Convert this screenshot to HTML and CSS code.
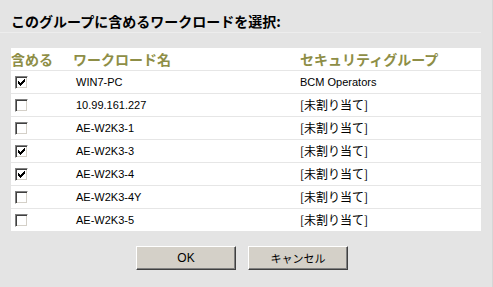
FILE: index.html
```html
<!DOCTYPE html>
<html lang="ja">
<head>
<meta charset="utf-8">
<title>ワークロード選択</title>
<link rel="stylesheet" href="styles.css">
</head>
<body>
<div class="page">
  <div class="title">このグループに含めるワークロードを選択:</div>
  <div class="table">
    <div class="row head">
      <div class="c1">含める</div>
      <div class="c2">ワークロード名</div>
      <div class="c3">セキュリティグループ</div>
    </div>
    <div class="row">
      <div class="c1"><span class="cb checked"><svg viewBox="0 0 13 13" width="13" height="13"><path d="M9 3h1v1H9zM8 4h2v1H8zM3 5h1v1H3zM7 5h3v1H7zM3 6h2v1H3zM6 6h3v1H6zM3 7h5v1H3zM4 8h3v1H4zM5 9h1v1H5z"/></svg></span></div>
      <div class="c2 name">WIN7-PC</div>
      <div class="c3 name">BCM Operators</div>
    </div>
    <div class="row">
      <div class="c1"><span class="cb"></span></div>
      <div class="c2 name">10.99.161.227</div>
      <div class="c3 none">[未割り当て]</div>
    </div>
    <div class="row">
      <div class="c1"><span class="cb"></span></div>
      <div class="c2 name">AE-W2K3-1</div>
      <div class="c3 none">[未割り当て]</div>
    </div>
    <div class="row">
      <div class="c1"><span class="cb checked"><svg viewBox="0 0 13 13" width="13" height="13"><path d="M9 3h1v1H9zM8 4h2v1H8zM3 5h1v1H3zM7 5h3v1H7zM3 6h2v1H3zM6 6h3v1H6zM3 7h5v1H3zM4 8h3v1H4zM5 9h1v1H5z"/></svg></span></div>
      <div class="c2 name">AE-W2K3-3</div>
      <div class="c3 none">[未割り当て]</div>
    </div>
    <div class="row">
      <div class="c1"><span class="cb checked"><svg viewBox="0 0 13 13" width="13" height="13"><path d="M9 3h1v1H9zM8 4h2v1H8zM3 5h1v1H3zM7 5h3v1H7zM3 6h2v1H3zM6 6h3v1H6zM3 7h5v1H3zM4 8h3v1H4zM5 9h1v1H5z"/></svg></span></div>
      <div class="c2 name">AE-W2K3-4</div>
      <div class="c3 none">[未割り当て]</div>
    </div>
    <div class="row">
      <div class="c1"><span class="cb"></span></div>
      <div class="c2 name">AE-W2K3-4Y</div>
      <div class="c3 none">[未割り当て]</div>
    </div>
    <div class="row">
      <div class="c1"><span class="cb"></span></div>
      <div class="c2 name">AE-W2K3-5</div>
      <div class="c3 none">[未割り当て]</div>
    </div>
  </div>
  <div class="buttons">
    <button class="btn ok">OK</button>
    <button class="btn jp">キャンセル</button>
  </div>
</div>
</body>
</html>
```
FILE: styles.css
```css
html, body {
  margin: 0;
  padding: 0;
  background: #e4e4e4;
}
body {
  width: 492px;
  height: 287px;
  border-right: 1px solid #d6d6d6;
  font-family: "Noto Sans CJK JP", "Liberation Sans", sans-serif;
  color: #000;
}
.page {
  width: 481px;
}
.title {
  padding: 13px 0 3px 11px;
  line-height: 16px;
  font-size: 14px;
  font-weight: bold;
  border-bottom: 1px solid #ededed;
}
.table {
  margin: 15px 0 0 11px;
  width: 470px;
  background: #fff;
}
.row {
  display: grid;
  grid-template-columns: 62px 227px 1fr;
  align-items: center;
  height: 22px;
  border-top: 1px solid #e6e6e6;
}
.row.head {
  border-top: 0;
  height: 22px;
  font-size: 14px;
  font-weight: bold;
  color: #8e8e46;
}
.head .c1, .head .c2, .head .c3 {
  line-height: 16px;
}
.c1 {
  display: flex;
  align-items: center;
}
.row:not(.head) .c1 {
  padding-left: 4px;
}
.name {
  font-family: "Liberation Sans", Arial, sans-serif;
  font-size: 11px;
}
.row .c2.name {
  padding-left: 3px;
}
.none {
  font-size: 12px;
  line-height: 14px;
}
.cb {
  display: block;
  box-sizing: border-box;
  width: 13px;
  height: 13px;
  border: 1px solid;
  border-color: #808080 #ffffff #ffffff #808080;
  box-shadow: inset 1px 1px 0 #404040, inset -1px -1px 0 #d4d0c8;
  background: #fff;
  position: relative;
}
.cb svg {
  position: absolute;
  left: -1px;
  top: -1px;
  fill: #000;
  shape-rendering: crispEdges;
}
.buttons {
  display: flex;
  gap: 12px;
  padding-left: 136px;
  margin-top: 15px;
}
.btn {
  box-sizing: border-box;
  width: 100px;
  height: 24px;
  margin: 0;
  padding: 0;
  background: #d4d0c8;
  border: 1px solid;
  border-color: #ffffff #404040 #404040 #ffffff;
  box-shadow: inset -1px -1px 0 #808080;
  color: #000;
  font-family: "Liberation Sans", Arial, sans-serif;
  font-size: 12px;
}
.btn.jp {
  font-family: "Noto Sans CJK JP", sans-serif;
  font-size: 11px;
}
```
